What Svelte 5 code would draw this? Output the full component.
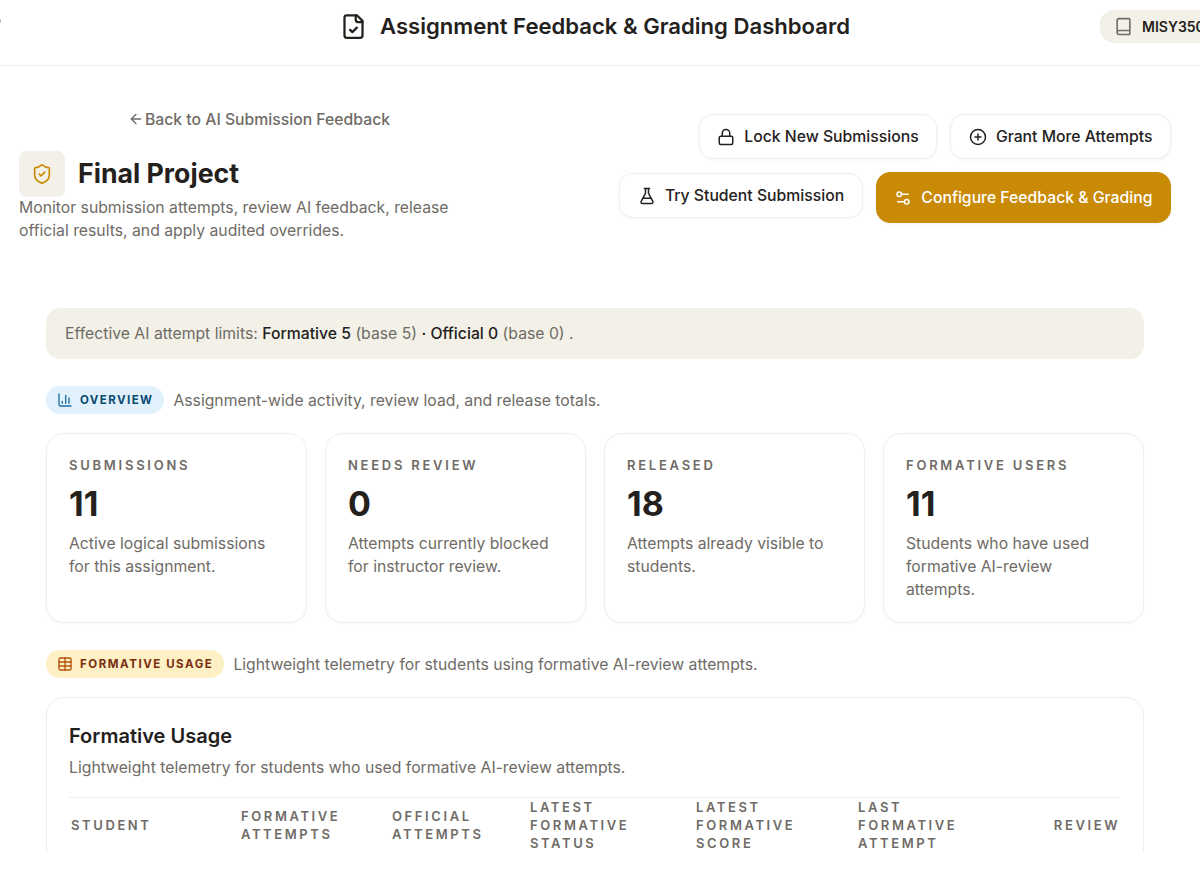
<script>
	const stats = [
		{ label: 'Submissions', value: '11', text: 'Active logical submissions for this assignment.' },
		{ label: 'Needs Review', value: '0', text: 'Attempts currently blocked for instructor review.' },
		{ label: 'Released', value: '18', text: 'Attempts already visible to students.' },
		{ label: 'Formative Users', value: '11', text: 'Students who have used formative AI-review attempts.' }
	];

	const columns = [
		{ label: 'Student', width: 170 },
		{ label: 'Formative Attempts', width: 151 },
		{ label: 'Official Attempts', width: 138 },
		{ label: 'Latest Formative Status', width: 166 },
		{ label: 'Latest Formative Score', width: 162 },
		{ label: 'Last Formative Attempt', width: 148 },
		{ label: 'Review', width: 116, right: true }
	];
</script>

<div class="viewport">
	<header class="topbar">
		<span class="edge-dot"></span>
		<div class="title">
			<svg class="title-icon" viewBox="0 0 24 24" fill="none" stroke="currentColor" stroke-width="2" stroke-linecap="round" stroke-linejoin="round">
				<path d="M15 2H6a2 2 0 0 0-2 2v16a2 2 0 0 0 2 2h12a2 2 0 0 0 2-2V7Z" />
				<path d="M14 2v4a2 2 0 0 0 2 2h4" />
				<path d="m9 15 2 2 4-4" />
			</svg>
			<h1>Assignment Feedback &amp; Grading Dashboard</h1>
		</div>
		<div class="course">
			<svg viewBox="0 0 24 24" fill="none" stroke="currentColor" stroke-width="2" stroke-linecap="round" stroke-linejoin="round">
				<path d="M4 19.5v-15A2.5 2.5 0 0 1 6.5 2H19a1 1 0 0 1 1 1v18a1 1 0 0 1-1 1H6.5a1 1 0 0 1 0-5H20" />
			</svg>
			<span>MISY350</span>
		</div>
	</header>

	<main>
		<section class="hero">
			<div class="hero-left">
				<a class="back" href="#back">
					<svg viewBox="0 0 24 24" fill="none" stroke="currentColor" stroke-width="2" stroke-linecap="round" stroke-linejoin="round">
						<path d="m12 19-7-7 7-7" />
						<path d="M19 12H5" />
					</svg>
					Back to AI Submission Feedback
				</a>
				<div class="project">
					<span class="project-icon">
						<svg viewBox="0 0 24 24" fill="none" stroke="currentColor" stroke-width="1.8" stroke-linecap="round" stroke-linejoin="round">
							<path d="M20 13c0 5-3.5 7.5-7.66 8.95a1 1 0 0 1-.67-.01C7.5 20.5 4 18 4 13V6a1 1 0 0 1 1-1c2 0 4.5-1.2 6.24-2.72a1.17 1.17 0 0 1 1.52 0C14.51 3.81 17 5 19 5a1 1 0 0 1 1 1z" />
							<path d="m9 12 2 2 4-4" />
						</svg>
					</span>
					<h2>Final Project</h2>
				</div>
				<p>Monitor submission attempts, review AI feedback, release official results, and apply audited overrides.</p>
			</div>

			<div class="actions">
				<button class="btn">
					<svg viewBox="0 0 24 24" fill="none" stroke="currentColor" stroke-width="2" stroke-linecap="round" stroke-linejoin="round">
						<rect width="18" height="11" x="3" y="11" rx="2" ry="2" />
						<path d="M7 11V7a5 5 0 0 1 10 0v4" />
					</svg>
					Lock New Submissions
				</button>
				<button class="btn">
					<svg viewBox="0 0 24 24" fill="none" stroke="currentColor" stroke-width="2" stroke-linecap="round" stroke-linejoin="round">
						<circle cx="12" cy="12" r="10" />
						<path d="M8 12h8" />
						<path d="M12 8v8" />
					</svg>
					Grant More Attempts
				</button>
				<button class="btn">
					<svg viewBox="0 0 24 24" fill="none" stroke="currentColor" stroke-width="2" stroke-linecap="round" stroke-linejoin="round">
						<path d="M14 2v6a2 2 0 0 0 .245.96l5.51 10.08A2 2 0 0 1 18 22H6a2 2 0 0 1-1.755-2.96l5.51-10.08A2 2 0 0 0 10 8V2" />
						<path d="M6.453 15h11.094" />
						<path d="M8.5 2h7" />
					</svg>
					Try Student Submission
				</button>
				<button class="btn primary">
					<svg viewBox="0 0 24 24" fill="none" stroke="currentColor" stroke-width="2" stroke-linecap="round" stroke-linejoin="round">
						<path d="M14 17H5" />
						<path d="M19 7h-9" />
						<circle cx="17" cy="17" r="3" />
						<circle cx="7" cy="7" r="3" />
					</svg>
					Configure Feedback &amp; Grading
				</button>
			</div>
		</section>

		<div class="limits">
			Effective AI attempt limits: <strong>Formative 5</strong> (base 5) <strong>· Official 0</strong> (base 0) .
		</div>

		<div class="section-head">
			<span class="chip blue">
				<svg viewBox="0 0 24 24" fill="none" stroke="currentColor" stroke-width="2" stroke-linecap="round" stroke-linejoin="round">
					<path d="M3 3v16a2 2 0 0 0 2 2h16" />
					<path d="M18 17V9" />
					<path d="M13 17V5" />
					<path d="M8 17v-3" />
				</svg>
				Overview
			</span>
			<span class="section-note">Assignment-wide activity, review load, and release totals.</span>
		</div>

		<div class="stats">
			{#each stats as stat}
				<div class="stat">
					<div class="stat-label">{stat.label}</div>
					<div class="stat-value">{stat.value}</div>
					<p>{stat.text}</p>
				</div>
			{/each}
		</div>

		<div class="section-head usage-head">
			<span class="chip amber">
				<svg viewBox="0 0 24 24" fill="none" stroke="currentColor" stroke-width="2" stroke-linecap="round" stroke-linejoin="round">
					<path d="M12 3v18" />
					<rect width="18" height="18" x="3" y="3" rx="2" />
					<path d="M3 9h18" />
					<path d="M3 15h18" />
				</svg>
				Formative Usage
			</span>
			<span class="section-note">Lightweight telemetry for students using formative AI-review attempts.</span>
		</div>

		<section class="usage">
			<h3>Formative Usage</h3>
			<p>Lightweight telemetry for students who used formative AI-review attempts.</p>
			<table>
				<thead>
					<tr>
						{#each columns as col}
							<th class:right={col.right} style="width: {col.width}px">{col.label}</th>
						{/each}
					</tr>
				</thead>
			</table>
		</section>
	</main>
</div>

<style>
	:global(body) {
		background: #fff;
		font-family: Inter, 'Liberation Sans', sans-serif;
		color: #24211d;
		overflow: hidden;
	}

	.viewport {
		height: 853px;
		overflow: hidden;
	}

	svg {
		display: block;
		flex: none;
	}

	.topbar {
		position: relative;
		height: 65px;
		border-bottom: 1px solid #f0efec;
		display: flex;
		align-items: center;
		justify-content: center;
	}

	.edge-dot {
		position: absolute;
		left: -2px;
		top: 19px;
		width: 3px;
		height: 4px;
		border-radius: 2px;
		background: #b9b6b1;
	}

	.title {
		display: flex;
		align-items: center;
		gap: 13px;
		margin-left: -10px;
		margin-top: -13px;
	}

	.title-icon {
		width: 27px;
		height: 27px;
	}

	h1 {
		margin: 0;
		font-size: 22.1px;
		font-weight: 600;
		line-height: 28px;
		color: #24211d;
	}

	.course {
		position: absolute;
		left: 1100px;
		top: 10px;
		width: 140px;
		height: 33px;
		box-sizing: border-box;
		padding-left: 13px;
		display: flex;
		align-items: center;
		gap: 9px;
		background: #f3f1e7;
		border: 1px solid #efede6;
		border-radius: 14px;
		font-size: 14px;
		font-weight: 600;
		color: #24211d;
	}

	.course svg {
		width: 19px;
		height: 19px;
		color: #6f6b66;
	}

	main {
		padding: 0 56px 0 46px;
	}

	.hero {
		display: flex;
		justify-content: space-between;
		margin: 0 -27px;
		height: 242px;
		box-sizing: border-box;
		padding-top: 42px;
	}

	.hero-left {
		width: 480px;
	}

	.back {
		display: flex;
		align-items: center;
		justify-content: center;
		gap: 1px;
		height: 22px;
		font-size: 15.75px;
		font-weight: 500;
		color: #6f6b66;
		text-decoration: none;
	}

	.back svg {
		width: 16px;
		height: 16px;
	}

	.project {
		display: flex;
		align-items: center;
		gap: 13px;
		margin-top: 21px;
	}

	.project-icon {
		width: 46px;
		height: 46px;
		border-radius: 8px;
		background: #f3f1e7;
		display: flex;
		align-items: center;
		justify-content: center;
		color: #c98a06;
	}

	.project-icon svg {
		width: 22px;
		height: 22px;
	}

	h2 {
		margin: -2px 0 0;
		font-size: 26.7px;
		font-weight: 700;
		color: #24211d;
	}

	.hero-left p {
		margin: 0;
		width: 450px;
		font-size: 15.75px;
		line-height: 22.5px;
		color: #6f6b66;
	}

	.actions {
		width: 570px;
		display: flex;
		flex-wrap: wrap;
		justify-content: flex-end;
		align-items: flex-start;
		align-content: flex-start;
		gap: 14px 13px;
		margin-top: 6px;
	}

	.btn {
		display: inline-flex;
		align-items: center;
		gap: 9px;
		height: 45px;
		padding: 0 17.6px;
		background: #fff;
		border: 1px solid #f0efec;
		border-radius: 14px;
		box-shadow: 0 1px 3px rgba(36, 33, 29, 0.05);
		font-family: inherit;
		font-size: 15.75px;
		font-weight: 500;
		color: #24211d;
	}

	.btn svg {
		width: 18px;
		height: 18px;
	}

	.btn.primary {
		height: 51px;
		margin-top: -1px;
		background: #c98a06;
		border-color: #c98a06;
		color: #fff;
	}

	.limits {
		height: 51px;
		box-sizing: border-box;
		padding-left: 19px;
		display: flex;
		align-items: center;
		white-space: pre-wrap;
		background: #f3f1e7;
		border-radius: 14px;
		font-size: 15.75px;
		color: #6f6b66;
	}

	.limits strong {
		font-weight: 500;
		color: #24211d;
	}

	.section-head {
		display: flex;
		align-items: center;
		gap: 9px;
		margin-top: 27px;
	}

	.chip {
		display: inline-flex;
		align-items: center;
		gap: 7px;
		height: 28px;
		padding: 0 11px;
		border-radius: 14px;
		font-size: 11.5px;
		font-weight: 700;
		text-transform: uppercase;
	}

	.chip svg {
		width: 16px;
		height: 16px;
	}

	.blue {
		background: #e1f1fc;
		color: #0b4a6f;
		letter-spacing: 1.42px;
	}

	.blue svg {
		color: #1a6fa8;
	}

	.amber {
		background: #fdf0c5;
		color: #7a2e0e;
		letter-spacing: 1.55px;
	}

	.amber svg {
		color: #b4540a;
	}

	.section-note {
		font-size: 15.75px;
		color: #6f6b66;
	}

	.stats {
		display: grid;
		grid-template-columns: repeat(4, 1fr);
		gap: 18px;
		margin-top: 19px;
	}

	.stat {
		height: 190px;
		box-sizing: border-box;
		padding: 22px 22px;
		background: #fff;
		border: 1px solid #f0efec;
		border-radius: 18px;
		box-shadow: 0 1px 3px rgba(36, 33, 29, 0.04);
	}

	.stat-label {
		font-size: 13px;
		line-height: 18px;
		font-weight: 600;
		letter-spacing: 2.75px;
		text-transform: uppercase;
		color: #6f6b66;
	}

	.stat-value {
		margin-top: 9px;
		font-size: 34px;
		line-height: 42px;
		font-weight: 700;
		color: #24211d;
	}

	.stat p {
		margin: 7px 0 0;
		font-size: 15.75px;
		line-height: 23px;
		color: #6f6b66;
	}

	.usage-head {
		margin-top: 27px;
	}

	.usage {
		margin-top: 19px;
		padding: 24px 22px;
		height: 300px;
		box-sizing: border-box;
		background: #fff;
		border: 1px solid #f0efec;
		border-radius: 18px;
	}

	h3 {
		margin: 0;
		font-size: 20px;
		line-height: 28px;
		font-weight: 600;
		color: #24211d;
	}

	.usage p {
		margin: 7px 0 0;
		font-size: 15.75px;
		line-height: 22px;
		color: #6f6b66;
	}

	table {
		width: 1051px;
		margin-top: 18px;
		border-collapse: collapse;
		table-layout: fixed;
		border-top: 1px solid #f0efec;
	}

	th {
		box-sizing: border-box;
		padding: 0 2px;
		text-align: left;
		font-size: 13px;
		line-height: 18px;
		font-weight: 600;
		letter-spacing: 2.6px;
		text-transform: uppercase;
		color: #6f6b66;
	}

	th.right {
		padding-right: 0;
		text-align: right;
	}
</style>
